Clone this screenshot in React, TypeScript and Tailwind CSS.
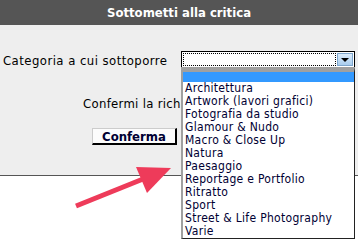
import { useState } from 'react'

const categorie = [
  'Architettura',
  'Artwork (lavori grafici)',
  'Fotografia da studio',
  'Glamour & Nudo',
  'Macro & Close Up',
  'Natura',
  'Paesaggio',
  'Reportage e Portfolio',
  'Ritratto',
  'Sport',
  'Street & Life Photography',
  'Varie',
]

export default function App() {
  const [aperto] = useState<boolean>(true)

  return (
    <div className="relative w-[358px] h-[243px] overflow-hidden bg-white font-['DejaVu_Sans_Condensed','DejaVu_Sans',sans-serif] text-[13px] text-black">
      <div className="h-[25px] bg-[#555555] flex items-center justify-center text-white font-bold text-[13px]">
        Sottometti alla critica
      </div>
      <div className="h-[151px] bg-[#eeeeee] border-b border-[#555555] flex flex-col">
        <div className="mt-[26px] flex items-start h-[17px]">
          <div className="w-[181px] pl-[3px] pt-[1px] leading-[17px] tracking-[0.45px] whitespace-nowrap">
            Categoria a cui sottoporre
          </div>
          <div className="relative w-[174px] h-[17px] bg-white border border-black flex items-stretch">
            <div className="flex-1 m-px border border-dotted border-black" />
            <div className="w-[16px] my-px mr-px bg-gradient-to-b from-[#dcecfb] to-[#a9cdee] border border-[#7ea6cc] flex items-center justify-center">
              <div className="w-0 h-0 border-l-[4px] border-r-[4px] border-t-[4px] border-l-transparent border-r-transparent border-t-black" />
            </div>
            {aperto && (
              <div className="absolute left-[-1px] top-full w-[174px] bg-white border-l-2 border-t-[5px] border-r border-b border-l-[#a0a0a0] border-t-[#a0a0a0] border-r-[#222222] border-b-[#222222] text-[#000033] text-[12px] tracking-[0.3px] z-10">
                <div className="h-[10px] bg-[#3399ff]" />
                {categorie.map((c) => (
                  <div key={c} className="h-[13px] leading-[13px] pl-[2px] whitespace-nowrap">
                    {c}
                  </div>
                ))}
              </div>
            )}
          </div>
        </div>
        <div className="mt-[28px] w-[181px] overflow-hidden pl-[83px] leading-[16px] whitespace-nowrap tracking-[0.3px]">
          Confermi la richiesta di critica?
        </div>
        <div className="mt-[16px] pl-[92px]">
          <button className="w-[85px] h-[17px] bg-[#fcfcfc] border border-t-[#cccccc] border-l-[#cccccc] border-r-2 border-b-2 border-r-black border-b-black text-[#000033] font-bold text-[13px] leading-[13px] flex items-center justify-center">
            Conferma
          </button>
        </div>
      </div>
      <svg className="absolute left-0 top-0 z-20" width="358" height="243" viewBox="0 0 358 243">
        <line x1="76" y1="206" x2="158" y2="173" stroke="#ee3b5a" strokeWidth="5" />
        <polygon points="136,167 171,168 147,193" fill="#ee3b5a" />
      </svg>
    </div>
  )
}
